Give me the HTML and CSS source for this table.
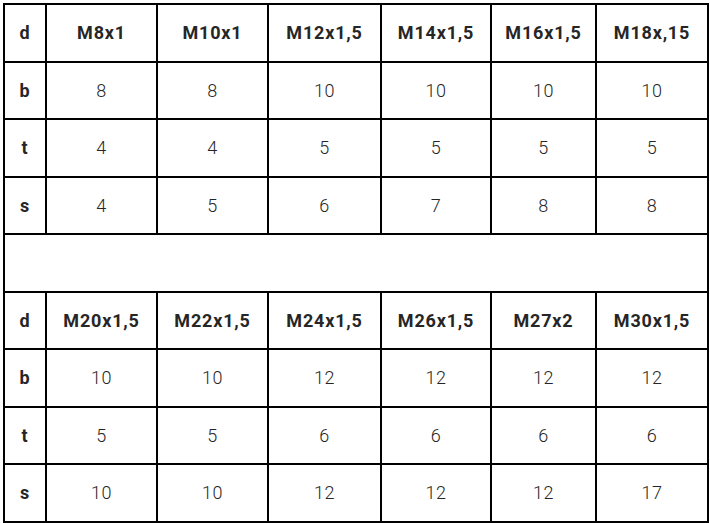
FILE: index.html
```
<!DOCTYPE html>
<html>
<head>
<meta charset="utf-8">
<link rel="stylesheet" href="styles.css">
</head>
<body>
<table class="spec">
  <colgroup>
    <col class="c0"><col class="c1"><col class="c2"><col class="c3"><col class="c4"><col class="c5"><col class="c6">
  </colgroup>
  <tbody>
    <tr class="head"><th>d</th><th>M8x1</th><th>M10x1</th><th>M12x1,5</th><th>M14x1,5</th><th>M16x1,5</th><th>M18x,15</th></tr>
    <tr><th>b</th><td>8</td><td>8</td><td>10</td><td>10</td><td>10</td><td>10</td></tr>
    <tr><th>t</th><td>4</td><td>4</td><td>5</td><td>5</td><td>5</td><td>5</td></tr>
    <tr><th>s</th><td>4</td><td>5</td><td>6</td><td>7</td><td>8</td><td>8</td></tr>
    <tr class="gap"><td colspan="7"></td></tr>
    <tr class="head"><th>d</th><th>M20x1,5</th><th>M22x1,5</th><th>M24x1,5</th><th>M26x1,5</th><th>M27x2</th><th>M30x1,5</th></tr>
    <tr><th>b</th><td>10</td><td>10</td><td>12</td><td>12</td><td>12</td><td>12</td></tr>
    <tr><th>t</th><td>5</td><td>5</td><td>6</td><td>6</td><td>6</td><td>6</td></tr>
    <tr><th>s</th><td>10</td><td>10</td><td>12</td><td>12</td><td>12</td><td>17</td></tr>
  </tbody>
</table>
</body>
</html>
```
FILE: styles.css
```
html, body {
  margin: 0;
  padding: 0;
  background: #fff;
}
body {
  padding: 3px;
  font-family: Roboto, "Liberation Sans", sans-serif;
  color: #262626;
}
.spec {
  border-collapse: collapse;
  table-layout: fixed;
  width: 704px;
}
.c0 { width: 42px; }
.c1 { width: 111px; }
.c2 { width: 111px; }
.c3 { width: 113px; }
.c4 { width: 110px; }
.c5 { width: 105px; }
.c6 { width: 112px; }
.spec th, .spec td {
  border: 2px solid #000;
  text-align: center;
  vertical-align: middle;
  font-size: 18px;
  padding: 0;
  height: 55px;
}
.spec th {
  font-weight: 700;
  letter-spacing: 0.8px;
}
.spec td {
  font-weight: 300;
  letter-spacing: 0.5px;
}
.spec tr {
  height: 57.5px;
}
```
